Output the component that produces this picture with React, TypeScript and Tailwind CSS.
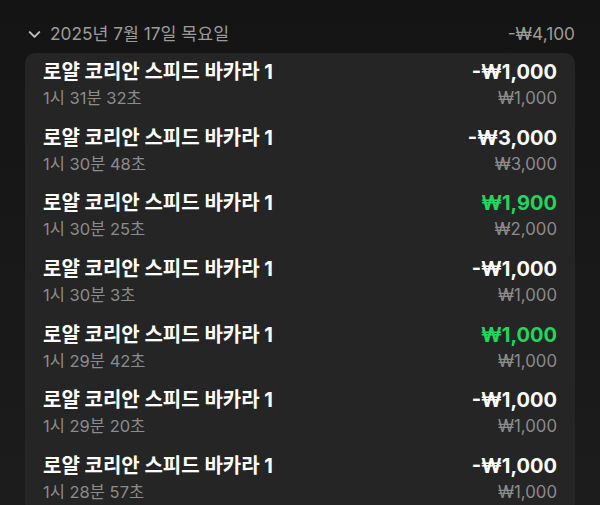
import { ChevronDown } from "lucide-react";

type Bet = {
  time: string;
  result: string;
  stake: string;
  win?: boolean;
};

const BETS: Bet[] = [
  { time: "1시 31분 32초", result: "-₩1,000", stake: "₩1,000" },
  { time: "1시 30분 48초", result: "-₩3,000", stake: "₩3,000" },
  { time: "1시 30분 25초", result: "₩1,900", stake: "₩2,000", win: true },
  { time: "1시 30분 3초", result: "-₩1,000", stake: "₩1,000" },
  { time: "1시 29분 42초", result: "₩1,000", stake: "₩1,000", win: true },
  { time: "1시 29분 20초", result: "-₩1,000", stake: "₩1,000" },
  { time: "1시 28분 57초", result: "-₩1,000", stake: "₩1,000" },
];

export default function App() {
  return (
    <main
      className="h-[505px] w-[600px] overflow-hidden bg-gradient-to-b from-[#141414] to-[#1c1c1c] px-[25px]"
      style={{ fontFamily: '"Inter", "Noto Sans CJK KR", sans-serif' }}
    >
      <div className="flex h-[53px] items-center justify-between pt-[15px] text-[17.3px] text-[#9b9b9b]">
        <div className="flex items-center gap-[6px]">
          <ChevronDown className="h-[19px] w-[19px] text-[#bdbdbd]" strokeWidth={2.6} />
          <span>2025년 7월 17일 목요일</span>
        </div>
        <span>-₩4,100</span>
      </div>

      <div className="rounded-[10px] bg-[#252525]">
        {BETS.map((bet, i) => (
          <BetRow key={i} bet={bet} />
        ))}
      </div>
    </main>
  );
}

function BetRow({ bet }: { bet: Bet }) {
  return (
    <div className="flex h-[65.7px] justify-between px-[18px] pt-[6px]">
      <div className="flex flex-col">
        <span className="text-[20px] font-bold leading-[27px] text-white">
          로얄 코리안 스피드 바카라 1
        </span>
        <span className="text-[16.5px] leading-[24px] text-[#8c8c8c]">{bet.time}</span>
      </div>
      <div className="flex flex-col items-end">
        <span
          className={`text-[20px] font-bold leading-[27px] ${
            bet.win ? "text-[#1fd65f]" : "text-white"
          }`}
        >
          {bet.result}
        </span>
        <span className="text-[16.8px] leading-[24px] text-[#8c8c8c]">{bet.stake}</span>
      </div>
    </div>
  );
}
